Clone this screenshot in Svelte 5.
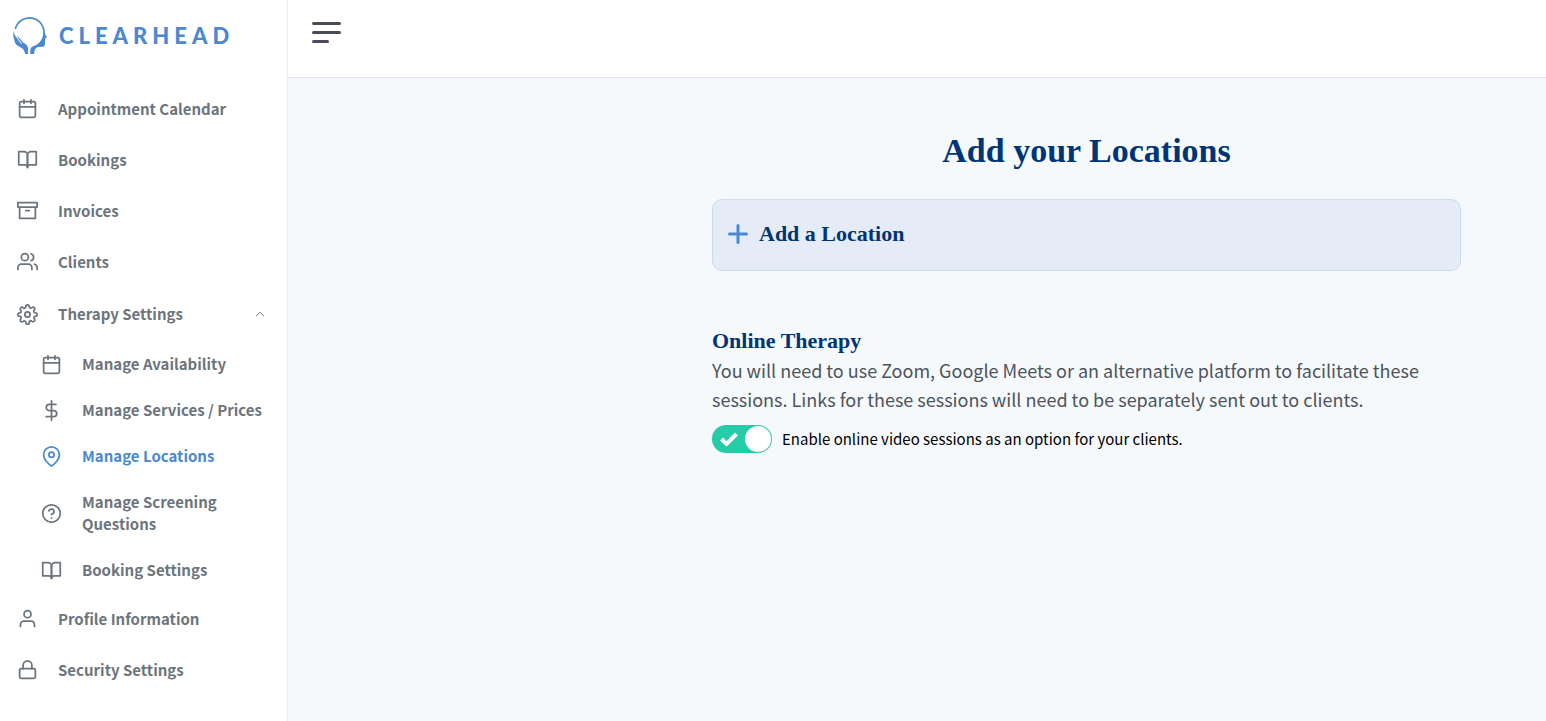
<script>
  const icons = {
    calendar: ['M5 4h14a2 2 0 0 1 2 2v14a2 2 0 0 1-2 2H5a2 2 0 0 1-2-2V6a2 2 0 0 1 2-2z', 'M16 2v4', 'M8 2v4', 'M3 10h18'],
    book: ['M2 3h6a4 4 0 0 1 4 4v14a3 3 0 0 0-3-3H2z', 'M22 3h-6a4 4 0 0 0-4 4v14a3 3 0 0 1 3-3h7z'],
    archive: ['M21 8v13H3V8', 'M1 3h22v5H1z', 'M10 12h4'],
    users: ['M17 21v-2a4 4 0 0 0-4-4H5a4 4 0 0 0-4 4v2', 'M13 7a4 4 0 1 1-8 0 4 4 0 0 1 8 0z', 'M23 21v-2a4 4 0 0 0-3-3.87', 'M16 3.13a4 4 0 0 1 0 7.75'],
    settings: ['M15 12a3 3 0 1 1-6 0 3 3 0 0 1 6 0z', 'M19.4 15a1.65 1.65 0 0 0 .33 1.82l.06.06a2 2 0 0 1 0 2.83 2 2 0 0 1-2.83 0l-.06-.06a1.65 1.65 0 0 0-1.82-.33 1.65 1.65 0 0 0-1 1.51V21a2 2 0 0 1-2 2 2 2 0 0 1-2-2v-.09A1.65 1.65 0 0 0 9 19.4a1.65 1.65 0 0 0-1.82.33l-.06.06a2 2 0 0 1-2.83 0 2 2 0 0 1 0-2.83l.06-.06a1.65 1.65 0 0 0 .33-1.82 1.65 1.65 0 0 0-1.51-1H3a2 2 0 0 1-2-2 2 2 0 0 1 2-2h.09A1.65 1.65 0 0 0 4.6 9a1.65 1.65 0 0 0-.33-1.82l-.06-.06a2 2 0 0 1 0-2.83 2 2 0 0 1 2.83 0l.06.06a1.65 1.65 0 0 0 1.82.33H9a1.65 1.65 0 0 0 1-1.51V3a2 2 0 0 1 2-2 2 2 0 0 1 2 2v.09a1.65 1.65 0 0 0 1 1.51 1.65 1.65 0 0 0 1.82-.33l.06-.06a2 2 0 0 1 2.83 0 2 2 0 0 1 0 2.83l-.06.06a1.65 1.65 0 0 0-.33 1.82V9a1.65 1.65 0 0 0 1.51 1H21a2 2 0 0 1 2 2 2 2 0 0 1-2 2h-.09a1.65 1.65 0 0 0-1.51 1z'],
    dollar: ['M12 1v22', 'M17 5H9.5a3.5 3.5 0 0 0 0 7h5a3.5 3.5 0 0 1 0 7H6'],
    pin: ['M21 10c0 7-9 13-9 13s-9-6-9-13a9 9 0 0 1 18 0z', 'M15 10a3 3 0 1 1-6 0 3 3 0 0 1 6 0z'],
    help: ['M22 12a10 10 0 1 1-20 0 10 10 0 0 1 20 0z', 'M9.09 9a3 3 0 0 1 5.83 1c0 2-3 3-3 3', 'M12 17h.01'],
    user: ['M20 21v-2a4 4 0 0 0-4-4H8a4 4 0 0 0-4 4v2', 'M16 7a4 4 0 1 1-8 0 4 4 0 0 1 8 0z'],
    lock: ['M5 11h14a2 2 0 0 1 2 2v7a2 2 0 0 1-2 2H5a2 2 0 0 1-2-2v-7a2 2 0 0 1 2-2z', 'M7 11V7a5 5 0 0 1 10 0v4']
  };

  const nav = [
    { label: 'Appointment Calendar', icon: 'calendar' },
    { label: 'Bookings', icon: 'book' },
    { label: 'Invoices', icon: 'archive' },
    { label: 'Clients', icon: 'users' },
    {
      label: 'Therapy Settings',
      icon: 'settings',
      children: [
        { label: 'Manage Availability', icon: 'calendar' },
        { label: 'Manage Services / Prices', icon: 'dollar' },
        { label: 'Manage Locations', icon: 'pin', active: true },
        { label: 'Manage Screening Questions', icon: 'help' },
        { label: 'Booking Settings', icon: 'book' }
      ]
    },
    { label: 'Profile Information', icon: 'user' },
    { label: 'Security Settings', icon: 'lock' }
  ];

  let expanded = $state(true);
  let online = $state(true);
</script>

{#snippet icon(name)}
  <svg class="icon" viewBox="0 0 24 24" aria-hidden="true">
    {#each icons[name] as d}<path {d} />{/each}
  </svg>
{/snippet}

<div class="app">
  <aside class="sidebar">
    <a class="brand" href="#home">
      <svg class="logo" viewBox="0 0 36 38" aria-hidden="true">
        <path class="arc" d="M3.3 12A14.6 14.6 0 0 1 32 17Q32 22 29 25.5" />
        <path d="M32.4 14.5L33 17L35 20.3L33.3 21.5L33 26.5Q33 29.600 31 29.700L26 30Q22.300 31 22 37H18.300V33Q18.400 30.500 21 29.300Q26.500 27.500 29 23.500Q31.500 20 31.500 15Z" />
        <path d="M1.200 14L2.800 18.200L9.300 27L10 26.500L4.800 19.600Q5.500 19.300 6.500 20.300L11.500 25.700Q16 28 16 31.500V37H13Q12.800 32.800 9.500 30.900L5 28.200Q3.200 27 2.700 24.500L1.300 19Z" />
      </svg>
      <span>CLEARHEAD</span>
    </a>
    <nav aria-label="Main">
      <ul>
        {#each nav as item}
          <li>
            {#if item.children}
              <button class="row parent" aria-expanded={expanded} onclick={() => (expanded = !expanded)}>
                {@render icon(item.icon)}
                <span class="label">{item.label}</span>
                <svg class="chevron" class:closed={!expanded} viewBox="0 0 10 6" aria-hidden="true"><path d="M1 5.200L5 1.200L9 5.200" /></svg>
              </button>
              {#if expanded}
                <ul>
                  {#each item.children as child}
                    <li>
                      <a class="row child" class:active={child.active} href="#{child.icon}" aria-current={child.active ? 'page' : undefined}>
                        {@render icon(child.icon)}
                        <span class="label">{child.label}</span>
                      </a>
                    </li>
                  {/each}
                </ul>
              {/if}
            {:else}
              <a class="row" href="#{item.icon}">
                {@render icon(item.icon)}
                <span class="label">{item.label}</span>
              </a>
            {/if}
          </li>
        {/each}
      </ul>
    </nav>
  </aside>

  <div class="page">
    <header>
      <button class="menu" aria-label="Toggle menu"><i></i><i></i><i class="short"></i></button>
    </header>
    <main>
      <div class="content">
        <h1>Add your Locations</h1>
        <button class="add">
          <svg class="plus" viewBox="0 0 20 20" aria-hidden="true"><path d="M10 1.500v17M1.500 10h17" /></svg>
          <span>Add a Location</span>
        </button>
        <section>
          <h2>Online Therapy</h2>
          <p>You will need to use Zoom, Google Meets or an alternative platform to facilitate these sessions. Links for these sessions will need to be separately sent out to clients.</p>
          <label class="toggle">
            <input type="checkbox" role="switch" bind:checked={online} />
            <span class="track">
              <svg viewBox="0 0 18 14" aria-hidden="true"><path d="M1.500 7L6.500 12L16.500 2" /></svg>
              <span class="knob"></span>
            </span>
            <span>Enable online video sessions as an option for your clients.</span>
          </label>
        </section>
      </div>
    </main>
  </div>
</div>

<style>
  :global(body) {
    margin: 0;
    background: #fff;
  }
  .app {
    display: flex;
    min-height: 100vh;
    font-family: 'Noto Sans CJK SC', 'Noto Sans', sans-serif;
    color: #6c757d;
  }
  a {
    color: inherit;
    text-decoration: none;
  }
  button {
    margin: 0;
    border: 0;
    background: none;
    font: inherit;
    color: inherit;
    text-align: left;
    cursor: pointer;
  }
  ul {
    list-style: none;
    margin: 0;
    padding: 0;
  }
  .sidebar {
    box-sizing: border-box;
    flex: 0 0 288px;
    border-right: 1px solid #e9ecef;
    background: #fff;
  }
  .brand {
    display: flex;
    align-items: center;
    gap: 11px;
    height: 71px;
    padding: 0 12px;
    margin-bottom: 12px;
    font: 900 22px/24px Lato, sans-serif;
    letter-spacing: 5px;
    color: #4a89d1;
  }
  .logo {
    width: 36px;
    height: 38px;
    fill: currentColor;
  }
  .arc {
    fill: none;
    stroke: currentColor;
    stroke-width: 1.6;
  }
  .row {
    box-sizing: border-box;
    display: flex;
    align-items: center;
    gap: 20px;
    width: 100%;
    min-height: 51px;
    padding: 12px 22px 12px 17px;
    font-size: 15px;
    font-weight: 700;
    line-height: 22px;
  }
  .parent {
    min-height: 54px;
  }
  .child {
    min-height: 46px;
    padding-left: 41px;
  }
  .active {
    color: #4a89d1;
  }
  .label {
    flex: 1;
  }
  .icon {
    flex: none;
    width: 21px;
    height: 21px;
    fill: none;
    stroke: currentColor;
    stroke-width: 2;
    stroke-linecap: round;
    stroke-linejoin: round;
  }
  .chevron {
    width: 10px;
    height: 6px;
    fill: none;
    stroke: currentColor;
    stroke-width: 1;
  }
  .closed {
    transform: rotate(180deg);
  }
  .page {
    flex: 1;
    display: flex;
    flex-direction: column;
    min-width: 0;
  }
  header {
    box-sizing: border-box;
    height: 78px;
    padding: 22px 24px;
    border-bottom: 1px solid #e2e5e9;
    background: #fff;
  }
  .menu {
    display: flex;
    flex-direction: column;
    gap: 6px;
    padding: 0;
  }
  .menu i {
    width: 29px;
    height: 3px;
    border-radius: 2px;
    background: #484c58;
  }
  .menu .short {
    width: 17px;
  }
  main {
    flex: 1;
    display: grid;
    grid-template-columns: 424fr 749fr 85fr;
    align-items: start;
    background: #f5f9fc;
  }
  .content {
    grid-column: 2;
    padding: 53px 0 40px;
  }
  h1,
  h2,
  .add {
    font-family: 'Liberation Serif', serif;
    font-weight: 700;
    color: #003575;
  }
  h1 {
    margin: 0 0 28px;
    font-size: 34px;
    line-height: 40px;
    text-align: center;
  }
  .add {
    box-sizing: border-box;
    display: flex;
    align-items: center;
    gap: 11px;
    width: 100%;
    height: 72px;
    padding: 0 15px 2px;
    border: 1px solid #cbdcf2;
    border-radius: 10px;
    background: #e5ecf8;
    font-size: 22px;
    line-height: 28px;
  }
  .plus {
    width: 20px;
    height: 20px;
    fill: none;
    stroke: #4a89d1;
    stroke-width: 3;
    stroke-linecap: round;
  }
  section {
    margin-top: 54px;
  }
  h2 {
    margin: 0;
    font-size: 22px;
    line-height: 31px;
  }
  p {
    margin: 0;
    font-size: 18px;
    line-height: 29px;
    color: #4d545c;
  }
  .toggle {
    display: flex;
    align-items: center;
    gap: 10px;
    margin-top: 11px;
    font-size: 15px;
    line-height: 28px;
    color: #000;
    cursor: pointer;
  }
  .toggle input {
    position: absolute;
    opacity: 0;
    width: 60px;
    height: 28px;
    margin: 0;
  }
  .track {
    box-sizing: border-box;
    display: flex;
    align-items: center;
    justify-content: space-between;
    width: 60px;
    height: 28px;
    padding: 0 1px 0 8px;
    border-radius: 14px;
    background: #c5ccd3;
  }
  .toggle input:checked + .track {
    background: #27cba7;
  }
  .track svg {
    width: 18px;
    height: 14px;
    fill: none;
    stroke: #fff;
    stroke-width: 4;
  }
  .knob {
    width: 26px;
    height: 26px;
    border-radius: 50%;
    background: #fff;
  }
</style>
